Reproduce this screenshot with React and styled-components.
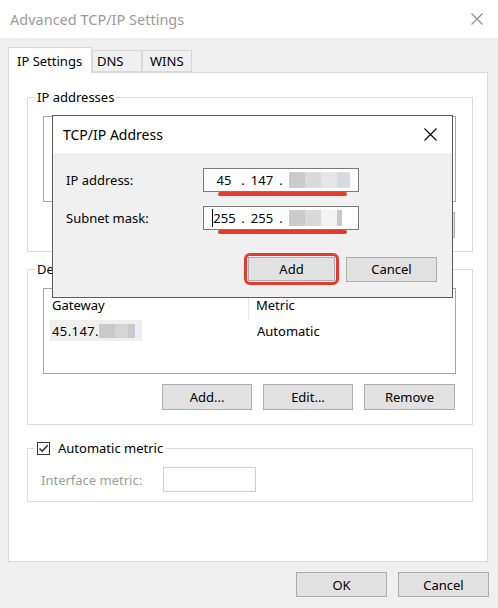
import React from 'react'
import styled, { createGlobalStyle } from 'styled-components'

const GlobalStyle = createGlobalStyle`
  html, body {
    margin: 0;
    padding: 0;
  }
  body {
    width: 498px;
    height: 608px;
    overflow: hidden;
    background: #f0f0f0;
    font-family: "Noto Sans", "Open Sans", sans-serif;
    font-size: 13px;
    color: #000;
  }
  * {
    box-sizing: border-box;
  }
`

const Window = styled.div`
    position: relative;
    width: 498px;
    height: 608px;
    display: flex;
    flex-direction: column;
    background: #f0f0f0;
`

const TitleBar = styled.div`
    flex: none;
    height: 38px;
    background: #fff;
    display: flex;
    align-items: center;
    justify-content: space-between;
    padding: 0 15px 0 10px;
`

const Title = styled.span`
    font-size: 14.5px;
    color: #9a9a9a;
`

const Body = styled.div`
    flex: 1;
    min-height: 0;
    display: flex;
    flex-direction: column;
    padding: 9px 10px 11px 8px;
`

const TabStrip = styled.div`
    position: relative;
    z-index: 1;
    display: flex;
    align-items: flex-end;
    height: 26px;
    margin-bottom: -1px;
`

const Tab = styled.div`
    width: ${p => p.$w}px;
    height: ${p => p.$active ? 26 : 22}px;
    margin-bottom: ${p => p.$active ? 0 : 1}px;
    padding-left: ${p => p.$pl}px;
    display: flex;
    align-items: center;
    background: ${p => p.$active ? '#fff' : '#f0f0f0'};
    border: 1px solid #d9d9d9;
    border-bottom: ${p => p.$active ? 'none' : '1px solid #d9d9d9'};
    white-space: nowrap;
`

const Panel = styled.div`
    flex: 1;
    display: flex;
    flex-direction: column;
    background: #fff;
    border: 1px solid #d9d9d9;
    padding: 16px 14px 0 18px;
`

const Group = styled.fieldset`
    margin: ${p => p.$mt || 0}px 0 0;
    padding: 0;
    border: 1px solid #dcdcdc;
    min-width: 0;
`

const Legend = styled.legend`
    margin-left: 7px;
    padding: 0 2px;
    line-height: 16px;
    height: 16px;
`

const LegendInner = styled.span`
    display: inline-flex;
    align-items: center;
    gap: 8px;
    height: 16px;
`

const GroupBody = styled.div`
    padding: ${p => p.$pad};
`

const ListBox = styled.div`
    height: 86px;
    background: #fff;
    border: 1px solid #a3a5a8;
`

const ListHeader = styled.div`
    display: grid;
    grid-template-columns: 205px 1fr;
    height: 31px;
`

const HeaderCell = styled.div`
    display: flex;
    align-items: center;
    padding-left: ${p => p.$first ? 8 : 7}px;
    border-right: ${p => p.$first ? '1px solid #e5e5e5' : 'none'};
`

const ListRow = styled.div`
    display: grid;
    grid-template-columns: 205px 1fr;
    height: 21px;
`

const RowCell = styled.div`
    display: flex;
    align-items: center;
    padding-left: ${p => p.$first ? 6 : 8}px;
`

const Selection = styled.span`
    display: inline-flex;
    align-items: center;
    width: 92px;
    height: 21px;
    padding-left: 2px;
    background: #efefef;
    letter-spacing: 0.4px;
`

const Chunk = styled.span`
    display: inline-block;
    flex: none;
    width: ${p => p.$w}px;
    height: ${p => p.$h}px;
    background: ${p => p.$bg};
`

const ChunkRow = styled.span`
    display: inline-flex;
    margin-left: ${p => p.$ml || 0}px;
`

const ButtonRow = styled.div`
    display: flex;
    justify-content: flex-end;
    gap: 11px;
    margin-top: 10px;
    padding-right: 1px;
`

const Button = styled.button`
    width: ${p => p.$w || 90}px;
    height: ${p => p.$h || 26}px;
    padding: 0;
    background: #e1e1e1;
    border: 1px solid #adadad;
    border-radius: 0;
    font: inherit;
    color: #000;
`

const Footer = styled.div`
    display: flex;
    justify-content: flex-end;
    gap: 11px;
    margin-top: 10px;
    margin-right: -1px;
`

const CheckBox = styled.span`
    display: inline-flex;
    align-items: center;
    justify-content: center;
    width: 13px;
    height: 13px;
    background: #fff;
    border: 1px solid #333;
`

const MetricRow = styled.div`
    display: flex;
    align-items: center;
`

const MetricLabel = styled.span`
    width: 122px;
    color: #9c9c9c;
`

const MetricInput = styled.div`
    width: 93px;
    height: 25px;
    background: #fff;
    border: 1px solid #cccccc;
`

/* the small TCP/IP Address dialog lying over the window */
const Dialog = styled.div`
    position: absolute;
    left: 52px;
    top: 115px;
    width: 401px;
    height: 183px;
    display: flex;
    flex-direction: column;
    background: #f0f0f0;
    border: 1px solid #5a5a5a;
    z-index: 5;
`

const DialogTitleBar = styled.div`
    flex: none;
    height: 37px;
    background: #fff;
    display: flex;
    align-items: center;
    justify-content: space-between;
    padding: 0 15px 0 10px;
`

const DialogTitle = styled.span`
    font-size: 14px;
`

const DialogBody = styled.div`
    flex: 1;
    display: flex;
    flex-direction: column;
    gap: 14px;
    padding: 15px 15px 12px 13px;
`

const FieldRow = styled.div`
    display: flex;
    align-items: center;
`

const FieldLabel = styled.span`
    width: 137px;
`

const IpBox = styled.div`
    position: relative;
    width: 156px;
    height: 24px;
    display: flex;
    align-items: center;
    padding-left: 5px;
    background: #fff;
    border: 1px solid #7a7a7a;
    &::after {
        content: '';
        position: absolute;
        left: 14px;
        right: 11px;
        bottom: -5px;
        height: 4px;
        border-radius: 2px;
        background: #e23b2e;
    }
`

const Octet = styled.span`
    width: 30px;
    display: inline-flex;
    justify-content: center;
    align-items: center;
    ${p => p.$caret && `
        &::before {
            content: '';
            display: inline-block;
            width: 1px;
            height: 18px;
            background: #000;
        }
    `}
`

const Dot = styled.span`
    width: 8px;
    text-align: center;
`

const DialogButtons = styled.div`
    display: flex;
    justify-content: flex-end;
    align-items: center;
    gap: 7px;
    margin-top: 9px;
`

const Highlight = styled.span`
    display: inline-flex;
    padding: 1px;
    border: 3px solid #e23b2e;
    border-radius: 6px;
`

function CloseIcon({ size, color }) {
    const e = size - 0.5
    return (
        <svg width={size} height={size} viewBox={`0 0 ${size} ${size}`}>
            <path d={`M0.5 0.5 L${e} ${e} M${e} 0.5 L0.5 ${e}`} stroke={color} strokeWidth="1.1" fill="none" />
        </svg>
    )
}

function Redacted({ chunks, h, ml }) {
    return (
        <ChunkRow $ml={ml}>
            {chunks.map((c, i) => (
                <Chunk key={i} $w={c[0]} $bg={c[1]} $h={h} />
            ))}
        </ChunkRow>
    )
}

function IpField({ first, second, hidden, caret }) {
    return (
        <IpBox>
            <Octet $caret={caret}>{first}</Octet>
            <Dot>.</Dot>
            <Octet>{second}</Octet>
            <Dot>.</Dot>
            <Redacted chunks={hidden} h={16} ml={4} />
        </IpBox>
    )
}

function AddressList({ cols, first, second }) {
    return (
        <ListBox>
            <ListHeader>
                <HeaderCell $first>{cols[0]}</HeaderCell>
                <HeaderCell>{cols[1]}</HeaderCell>
            </ListHeader>
            <ListRow>
                <RowCell $first>{first}</RowCell>
                <RowCell>{second}</RowCell>
            </ListRow>
        </ListBox>
    )
}

function ListButtons() {
    return (
        <ButtonRow>
            <Button>Add...</Button>
            <Button>Edit...</Button>
            <Button $w={91}>Remove</Button>
        </ButtonRow>
    )
}

export default function App() {
    return (
        <>
            <GlobalStyle />
            <Window>
                <TitleBar>
                    <Title>Advanced TCP/IP Settings</Title>
                    <CloseIcon size={12} color="#8a8a8a" />
                </TitleBar>
                <Body>
                    <TabStrip>
                        <Tab $active $w={84} $pl={8}>IP Settings</Tab>
                        <Tab $w={50} $pl={4}>DNS</Tab>
                        <Tab $w={50} $pl={7}>WINS</Tab>
                    </TabStrip>
                    <Panel>
                        <Group>
                            <Legend>IP addresses</Legend>
                            <GroupBody $pad="11px 16px 13px 15px">
                                {/* covered by the dialog: only its frame shows */}
                                <AddressList cols={['', '']} first="" second="" />
                                <ListButtons />
                            </GroupBody>
                        </Group>
                        <Group $mt={9}>
                            <Legend>Default gateways:</Legend>
                            <GroupBody $pad="11px 16px 14px 15px">
                                <AddressList
                                    cols={['Gateway', 'Metric']}
                                    first={
                                        <Selection>
                                            45.147.
                                            <Redacted
                                                h={14}
                                                chunks={[[16, '#c9c9c9'], [13, '#d4d4d4'], [5, '#cbcbcb'], [2, '#b8cbe0']]}
                                            />
                                        </Selection>
                                    }
                                    second="Automatic"
                                />
                                <ListButtons />
                            </GroupBody>
                        </Group>
                        <Group $mt={15}>
                            <Legend>
                                <LegendInner>
                                    <CheckBox>
                                        <svg width="11" height="11" viewBox="0 0 11 11">
                                            <path d="M1.5 5.5 L4.2 8.3 L9.6 2.2" stroke="#222" strokeWidth="1.4" fill="none" />
                                        </svg>
                                    </CheckBox>
                                    Automatic metric
                                </LegendInner>
                            </Legend>
                            <GroupBody $pad="11px 13px 9px 13px">
                                <MetricRow>
                                    <MetricLabel>Interface metric:</MetricLabel>
                                    <MetricInput />
                                </MetricRow>
                            </GroupBody>
                        </Group>
                    </Panel>
                    <Footer>
                        <Button $w={91} $h={25}>OK</Button>
                        <Button $w={91} $h={25}>Cancel</Button>
                    </Footer>
                </Body>

                <Dialog>
                    <DialogTitleBar>
                        <DialogTitle>TCP/IP Address</DialogTitle>
                        <CloseIcon size={13} color="#000" />
                    </DialogTitleBar>
                    <DialogBody>
                        <FieldRow>
                            <FieldLabel>IP address:</FieldLabel>
                            <IpField
                                first="45"
                                second="147"
                                hidden={[[16, '#cbcbcb'], [16, '#dadada'], [16, '#e5e4e6'], [13, '#d9dadd']]}
                            />
                        </FieldRow>
                        <FieldRow>
                            <FieldLabel>Subnet mask:</FieldLabel>
                            <IpField
                                caret
                                first="255"
                                second="255"
                                hidden={[[16, '#cbcbcb'], [16, '#d9d9d9'], [16, '#f3f3f3'], [5, '#c3cad3']]}
                            />
                        </FieldRow>
                        <DialogButtons>
                            <Highlight>
                                <Button $w={87} $h={24}>Add</Button>
                            </Highlight>
                            <Button $w={91} $h={25}>Cancel</Button>
                        </DialogButtons>
                    </DialogBody>
                </Dialog>
            </Window>
        </>
    )
}
